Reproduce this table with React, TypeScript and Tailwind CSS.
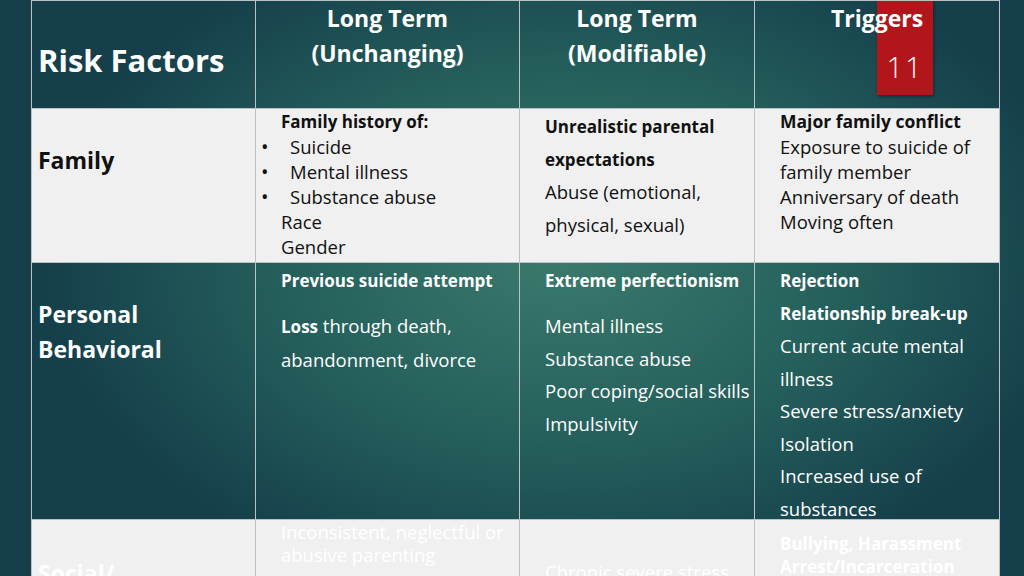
import React from "react";

const Line = ({ children, className = "" }: { children: React.ReactNode; className?: string }) => (
  <div className={"whitespace-nowrap " + className}>{children}</div>
);

const Bullet = ({ children }: { children: React.ReactNode }) => (
  <div className="flex whitespace-nowrap">
    <span className="w-[34px] pl-[5px] text-[20px]">•</span>
    <span>{children}</span>
  </div>
);

export default function App() {
  return (
    <div
      className="relative w-[1024px] h-[576px] overflow-hidden bg-[radial-gradient(ellipse_60%_70%_at_55%_45%,#3a7a6c_0%,#25605c_45%,#153f4b_85%)]"
      style={{ fontFamily: '"Open Sans", "DejaVu Sans", sans-serif' }}
    >
      {/* slide number badge */}
      <div className="absolute left-[877px] top-0 w-[56px] h-[95px] bg-[#b2161a] shadow-[1px_2px_3px_rgba(0,0,0,0.35)] flex items-end justify-center pb-[14px]">
        <span className="text-white text-[29px] font-light leading-none tracking-[2px]">11</span>
      </div>

      <div className="relative z-10 ml-[31px] w-[968px]">
        <table className="table-fixed border-collapse w-[968px]">
          <colgroup>
            <col className="w-[224px]" />
            <col className="w-[264px]" />
            <col className="w-[235px]" />
            <col className="w-[245px]" />
          </colgroup>
          <tbody>
            {/* header */}
            <tr className="h-[108px] text-white font-bold">
              <td className="border border-[#b9c3c3] align-top pl-[6px] pt-[42px] text-[31px] leading-[35px]">
                <Line>Risk Factors</Line>
              </td>
              <td className="border border-[#b9c3c3] align-top text-center text-[23px] leading-[35px]">
                <Line>Long Term</Line>
                <Line>(Unchanging)</Line>
              </td>
              <td className="border border-[#b9c3c3] align-top text-center text-[23px] leading-[35px]">
                <Line>Long Term</Line>
                <Line>(Modifiable)</Line>
              </td>
              <td className="border border-[#b9c3c3] align-top text-center text-[23px] leading-[35px]">
                <Line>Triggers</Line>
              </td>
            </tr>

            {/* family */}
            <tr className="h-[154px] bg-[#f0f0f0] text-[#111]">
              <td className="border border-[#b9c3c3] align-top pl-[6px] pt-[34px] text-[23px] leading-[35px] font-bold">
                <Line>Family</Line>
              </td>
              <td className="border border-[#b9c3c3] align-top text-[18.5px] leading-[25px]">
                <Line className="pl-[25px] font-bold text-[17px]">Family history of:</Line>
                <Bullet>Suicide</Bullet>
                <Bullet>Mental illness</Bullet>
                <Bullet>Substance abuse</Bullet>
                <Line className="pl-[25px]">Race</Line>
                <Line className="pl-[25px]">Gender</Line>
              </td>
              <td className="border border-[#b9c3c3] align-top pt-[2px] pl-[25px] text-[18.5px] leading-[32.5px]">
                <Line className="font-bold text-[17px]">Unrealistic parental</Line>
                <Line className="font-bold text-[17px]">expectations</Line>
                <Line>Abuse (emotional,</Line>
                <Line>physical, sexual)</Line>
              </td>
              <td className="border border-[#b9c3c3] align-top pl-[25px] text-[18.5px] leading-[25px]">
                <Line className="font-bold text-[17.5px]">Major family conflict</Line>
                <Line>Exposure to suicide of</Line>
                <Line>family member</Line>
                <Line>Anniversary of death</Line>
                <Line>Moving often</Line>
              </td>
            </tr>

            {/* personal behavioral */}
            <tr className="h-[257px] text-white">
              <td className="border border-[#b9c3c3] align-top pl-[6px] pt-[34px] text-[23px] leading-[35px] font-bold">
                <Line>Personal</Line>
                <Line>Behavioral</Line>
              </td>
              <td className="border border-[#b9c3c3] align-top pl-[25px] pt-[2px] text-[18.5px] leading-[32.5px]">
                <div className="h-[252px]">
                  <Line className="font-bold text-[17px] mb-[12.5px]">Previous suicide attempt</Line>
                  <Line>
                    <span className="font-bold text-[17px]">Loss</span> through death,
                  </Line>
                  <Line>abandonment, divorce</Line>
                </div>
              </td>
              <td className="border border-[#b9c3c3] align-top pl-[25px] pt-[2px] text-[18.5px] leading-[32.5px]">
                <div className="h-[252px]">
                  <Line className="font-bold text-[17px] mb-[12.5px]">Extreme perfectionism</Line>
                  <Line>Mental illness</Line>
                  <Line>Substance abuse</Line>
                  <Line>Poor coping/social skills</Line>
                  <Line>Impulsivity</Line>
                </div>
              </td>
              <td className="border border-[#b9c3c3] align-top pl-[25px] pt-[2px] text-[18.5px] leading-[32.5px]">
                <div className="h-[252px]">
                  <Line className="font-bold text-[17px]">Rejection</Line>
                  <Line className="font-bold text-[17px]">Relationship break-up</Line>
                  <Line>Current acute mental</Line>
                  <Line>illness</Line>
                  <Line>Severe stress/anxiety</Line>
                  <Line>Isolation</Line>
                  <Line>Increased use of</Line>
                  <Line>substances</Line>
                </div>
              </td>
            </tr>

            {/* social */}
            <tr className="h-[120px] bg-[#f0f0f0] text-white">
              <td className="border border-[#b9c3c3] align-top pl-[6px] pt-[36px] text-[23px] leading-[35px] font-bold">
                <Line>Social/</Line>
              </td>
              <td className="border border-[#b9c3c3] align-top pl-[25px] text-[18.5px] leading-[23px]">
                <Line>Inconsistent, neglectful or</Line>
                <Line>abusive parenting</Line>
              </td>
              <td className="border border-[#b9c3c3] align-top pt-[40px] pl-[25px] text-[18.5px] leading-[23px]">
                <Line>Chronic severe stress</Line>
              </td>
              <td className="border border-[#b9c3c3] align-top pt-[12px] pl-[25px] text-[17px] leading-[23px] font-bold">
                <Line>Bullying, Harassment</Line>
                <Line>Arrest/Incarceration</Line>
              </td>
            </tr>
          </tbody>
        </table>
      </div>
    </div>
  );
}
